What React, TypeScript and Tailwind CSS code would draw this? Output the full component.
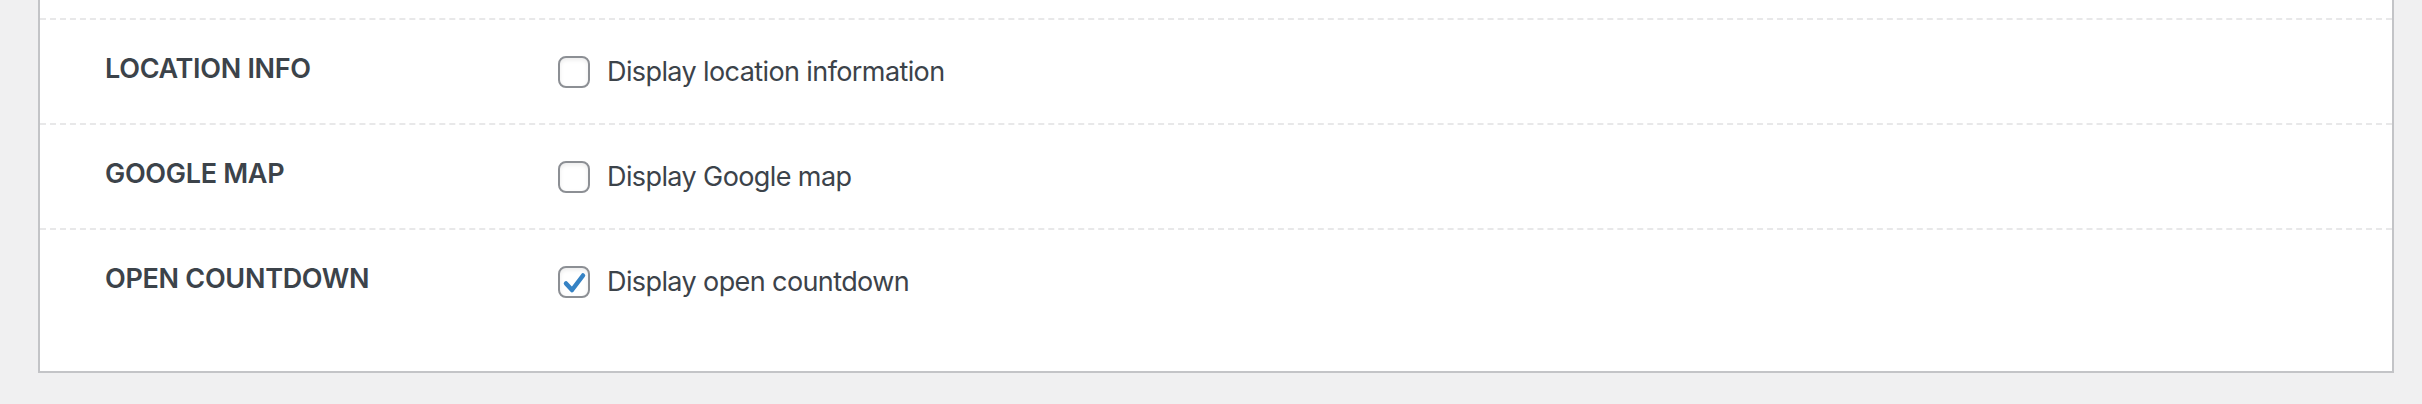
import React, { useState } from 'react';

interface SettingRow {
  id: string;
  label: string;
  description: string;
  checked: boolean;
}

const initialRows: SettingRow[] = [
  { id: 'location', label: 'LOCATION INFO', description: 'Display location information', checked: false },
  { id: 'map', label: 'GOOGLE MAP', description: 'Display Google map', checked: false },
  { id: 'countdown', label: 'OPEN COUNTDOWN', description: 'Display open countdown', checked: true }
];

const Checkbox: React.FC<{ checked: boolean; onChange: () => void }> = ({ checked, onChange }) => (
  <button
    type="button"
    onClick={onChange}
    className="flex h-[32px] w-[32px] shrink-0 items-center justify-center rounded-[8px] border-2 border-[#8c8f94] bg-white shadow-[inset_0_2px_4px_rgba(0,0,0,0.08)]"
  >
    {checked && (
      <svg width="26" height="26" viewBox="0 0 26 26">
        <path
          d="M5 14.5 L11 21 L22 6.5"
          fill="none"
          stroke="#3582c4"
          strokeWidth="4.5"
          strokeLinecap="round"
          strokeLinejoin="round"
        />
      </svg>
    )}
  </button>
);

const App: React.FC = () => {
  const [rows, setRows] = useState<SettingRow[]>(initialRows);

  const toggle = (id: string) => {
    setRows(prev => prev.map(r => (r.id === id ? { ...r, checked: !r.checked } : r)));
  };

  return (
    <div className="flex h-[404px] flex-col bg-[#f0f0f1] pl-[38px] pr-[28px] font-['Inter','Liberation_Sans',sans-serif] text-[#3c434a]">
      <div className="flex h-[373px] flex-col border-2 border-t-0 border-[#c3c4c7] bg-white">
        <div className="h-[18px]" />
        {rows.map((row, i) => (
          <div
            key={row.id}
            className={`flex items-start border-t-2 border-dashed border-[#e8e8e9] pl-[65px] ${
              i === rows.length - 1 ? 'flex-1' : 'h-[105px]'
            }`}
          >
            <div className="w-[453px] shrink-0 pt-[31px] text-[27px] leading-[36px] font-semibold tracking-[-0.3px]">
              {row.label}
            </div>
            <label className="flex items-center gap-[17px] pt-[34px] text-[27px] leading-[36px] tracking-[-0.6px]">
              <Checkbox checked={row.checked} onChange={() => toggle(row.id)} />
              <span>{row.description}</span>
            </label>
          </div>
        ))}
      </div>
    </div>
  );
};

export default App;
